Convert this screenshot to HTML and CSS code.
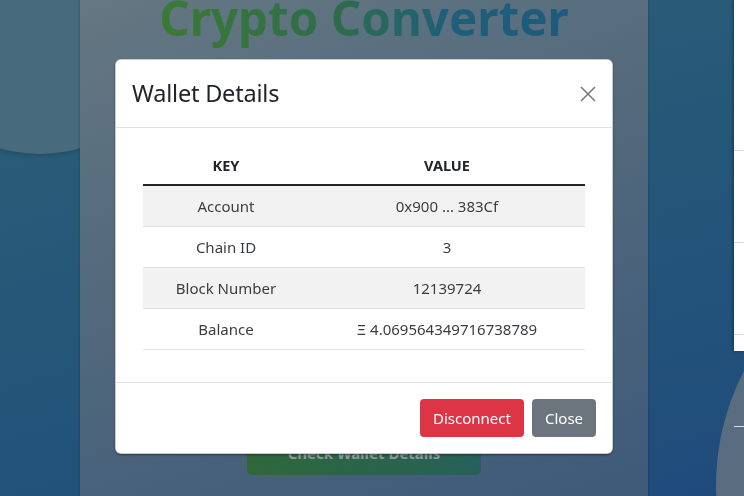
FILE: index.html
```html
<!DOCTYPE html>
<html lang="en">
<head>
<meta charset="utf-8">
<title>Crypto Converter</title>
<link rel="stylesheet" href="styles.css">
</head>
<body>
  <div class="bg-circle circle-top"></div>
  <div class="bg-circle circle-bottom"></div>

  <main class="layout">
    <section class="converter">
      <h1 class="title">Crypto Converter</h1>
      <button class="check-btn" type="button">Check Wallet Details</button>
    </section>
    <aside class="side-card">
      <div class="side-row"></div>
      <div class="side-row"></div>
      <div class="side-row"></div>
      <div class="side-row short"></div>
    </aside>
  </main>

  <div class="modal" role="dialog" aria-labelledby="walletTitle">
    <div class="modal-header">
      <h4 class="modal-title" id="walletTitle">Wallet Details</h4>
      <button class="btn-close" type="button" aria-label="Close">
        <svg viewBox="0 0 16 16" width="16" height="16"><path d="M1 1 L15 15 M15 1 L1 15" stroke="#7b7b7b" stroke-width="1.6" fill="none"/></svg>
      </button>
    </div>
    <div class="modal-body">
      <table class="wallet-table">
        <thead>
          <tr><th class="col-key">Key</th><th>Value</th></tr>
        </thead>
        <tbody>
          <tr><td>Account</td><td>0x900 ... 383Cf</td></tr>
          <tr><td>Chain ID</td><td>3</td></tr>
          <tr><td>Block Number</td><td>12139724</td></tr>
          <tr><td>Balance</td><td>Ξ 4.069564349716738789</td></tr>
        </tbody>
      </table>
    </div>
    <div class="modal-footer">
      <button class="btn btn-danger" type="button">Disconnect</button>
      <button class="btn btn-secondary" type="button">Close</button>
    </div>
  </div>
</body>
</html>
```

FILE: styles.css
```css
* { box-sizing: border-box; }

html, body {
  margin: 0;
  height: 100%;
}

body {
  position: relative;
  overflow: hidden;
  font-family: "Noto Sans", "Open Sans", sans-serif;
  color: #212529;
  background: linear-gradient(165deg, #2c6078 0%, #255878 45%, #1f4b7c 100%);
}

.bg-circle {
  position: absolute;
  border-radius: 50%;
  z-index: 0;
}

.circle-top {
  width: 300px;
  height: 300px;
  left: -110px;
  top: -146px;
  background: #476a7c;
  box-shadow: 0 2px 4px rgba(0, 0, 0, 0.15);
}

.circle-bottom {
  width: 500px;
  height: 500px;
  left: 716px;
  top: 236px;
  background: #5a6d80;
}

.layout {
  position: relative;
  z-index: 1;
  display: flex;
  gap: 86px;
  padding-left: 80px;
  height: 100%;
}

.converter {
  flex: 0 0 568px;
  height: 100%;
  display: flex;
  flex-direction: column;
  align-items: center;
  background: linear-gradient(160deg, #647782 0%, #52697c 45%, #3e5a7a 100%);
  box-shadow: 0 0 3px rgba(0, 0, 0, 0.25);
}

.title {
  margin: 0;
  font-size: 47.5px;
  line-height: 36px;
  font-weight: 700;
  letter-spacing: 0;
  white-space: nowrap;
  background: linear-gradient(90deg, #3b7a34 0%, #2d6c4c 45%, #1f5f7a 70%, #1d5a7c 100%);
  -webkit-background-clip: text;
  background-clip: text;
  color: transparent;
  padding-bottom: 14px;
}

.check-btn {
  margin-top: 380px;
  width: 234px;
  height: 45px;
  border: 0;
  border-radius: 5px;
  background: linear-gradient(90deg, #30673a 0%, #2a6448 50%, #27605a 100%);
  color: #8d9a9b;
  font-family: "Noto Sans", sans-serif;
  font-weight: 700;
  font-size: 15px;
}

.side-card {
  flex: 0 0 300px;
  height: 351px;
  background: #fff;
  box-shadow: -1px 0 3px rgba(0, 0, 0, 0.35);
  padding-top: 150px;
}

.side-row {
  height: 92px;
  border-top: 1px solid #dcdcdc;
}

.side-row.short {
  height: 16px;
}

/* Modal */
.modal {
  position: fixed;
  left: 115px;
  top: 59px;
  width: 498px;
  z-index: 10;
  background: #fff;
  border: 1px solid rgba(0, 0, 0, 0.2);
  border-radius: 6px;
  box-shadow: 0 1px 2px rgba(0, 0, 0, 0.45);
}

.modal-header {
  display: flex;
  align-items: center;
  justify-content: space-between;
  height: 68px;
  padding: 0 16px;
  border-bottom: 1px solid #dee2e6;
}

.modal-title {
  margin: 0;
  font-size: 23.5px;
  font-weight: 400;
  line-height: 1.5;
  color: #212529;
  letter-spacing: -0.2px;
}

.btn-close {
  display: flex;
  padding: 0;
  border: 0;
  background: none;
  width: 16px;
  height: 16px;
}

.modal-body {
  padding: 17px 27px 16px;
}

.wallet-table {
  width: 100%;
  border-collapse: collapse;
  margin-bottom: 16px;
  font-size: 15px;
  text-align: center;
}

.wallet-table th {
  height: 40px;
  padding: 0 8px;
  font-size: 14.5px;
  font-weight: 700;
  text-transform: uppercase;
  border-bottom: 2px solid #212529;
  color: #212529;
}

.wallet-table .col-key {
  width: 166px;
}

.wallet-table td {
  height: 41px;
  padding: 0 8px;
  border-bottom: 1px solid #dee2e6;
  color: #3a3d40;
}

.wallet-table tbody tr:nth-child(odd) td {
  background: #f2f2f2;
}

.modal-footer {
  display: flex;
  justify-content: flex-end;
  gap: 8px;
  padding: 16px;
  border-top: 1px solid #dee2e6;
}

.btn {
  height: 38px;
  padding: 0 12px;
  border: 1px solid transparent;
  border-radius: 4px;
  font-family: "Noto Sans", sans-serif;
  font-size: 15px;
  color: #fff;
}

.btn-danger {
  background: #dc3545;
  width: 104px;
}

.btn-secondary {
  background: #6c757d;
  width: 64px;
}
```
